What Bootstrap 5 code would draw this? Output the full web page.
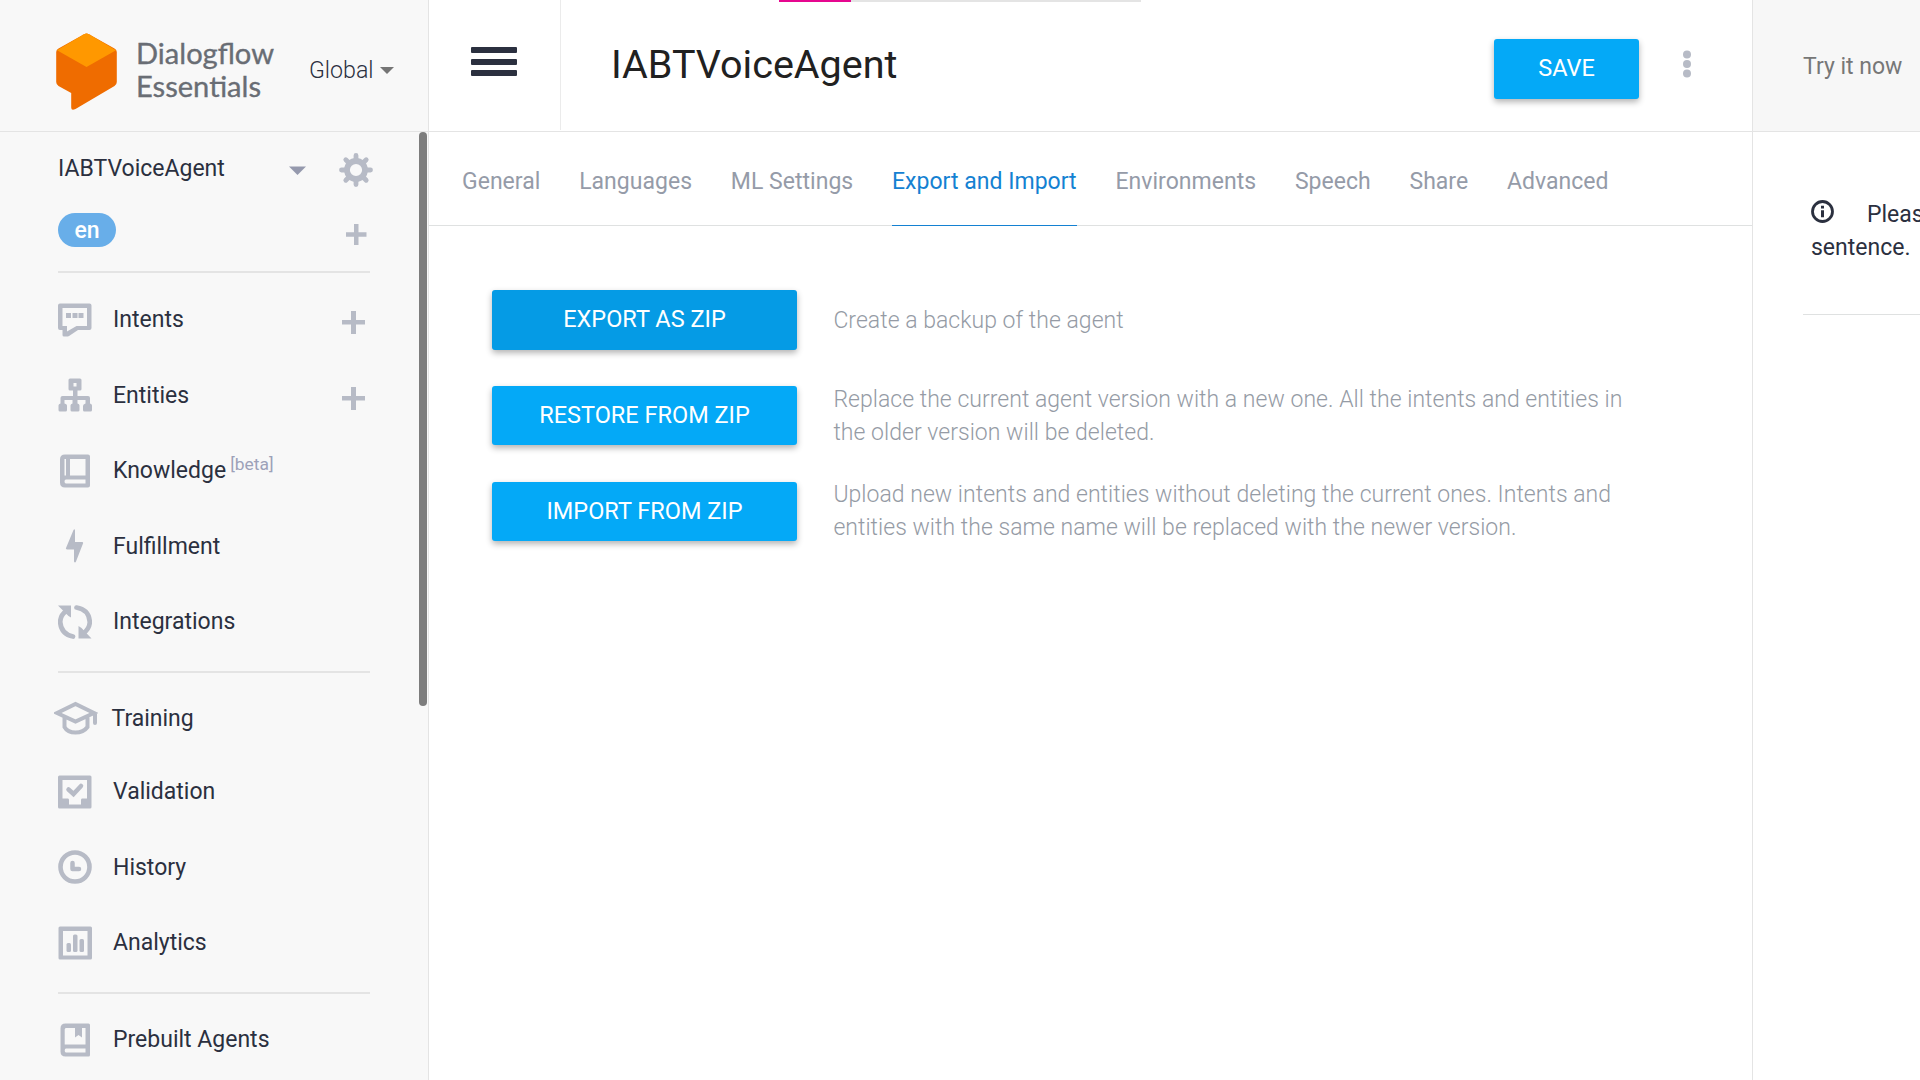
<!DOCTYPE html>
<html lang="en">
<head>
<meta charset="utf-8">
<title>Dialogflow Essentials</title>
<link href="https://cdn.jsdelivr.net/npm/bootstrap@5.3.0/dist/css/bootstrap.min.css" rel="stylesheet">
<style>
body{font-family:Roboto,"Liberation Sans",sans-serif;font-size:23px;line-height:33px;color:#2b303f;background:#fff;width:1920px;height:1080px;overflow:hidden}
svg{display:block;flex:none}
.side{width:429px;background:#f8f8f8;border-right:1px solid #e4e4e4}
.bar-top{height:132px;border-bottom:1px solid #e4e4e4}
.side .bar-top{padding-left:56px}
.region{font-weight:300;font-size:23.2px;margin-left:31px;padding-top:9px}
.side-scroll{height:948px;padding:0 58px;overflow:hidden}
.thumb{left:419px;top:132px;width:8px;height:574px;border-radius:4px;background:#7d7d7d}
.agent{height:75px}
.agent-name{margin-top:-2px}
.lang{height:64px}
.lang-pill{width:58px;height:34px;border-radius:17px;background:#68aee9;color:#fff;font-weight:500;line-height:36px;font-size:23px;margin-top:6px}
.rule{height:2px;background:#e4e4e4;flex:none}
.item{height:75.5px;gap:21px;flex:none}
.item-training{height:72px}
.gap-top{height:8.8px;flex:none}
.gap-end{height:11.7px;flex:none}
.gap-last{height:8px;flex:none}
.beta{font-size:17.4px;color:#9da1b8;top:-6px;margin-left:-17px}
.ico{fill:#b7bbc6;color:#b7bbc6}
.main{width:1323px}
.burger{width:132px;height:130px;border-right:1px solid #ebebeb;padding:47px 0 0 42px}
.burger span{display:block;width:46px;height:6px;border-radius:1px;background:#2b303f;margin-bottom:5.5px}
.agent-title{font-size:39.5px;line-height:48px;color:#212121;font-weight:400;margin:0;padding:41px 0 0 50px}
.mbtn{background:#04a9f7;color:#fff;border:0;border-radius:3px;font-size:23.5px;line-height:33px;padding:0;box-shadow:0 3px 6px rgba(0,0,0,.3)}
.save{width:145px;height:60px;margin:39px 44px 0 auto;padding-bottom:2px}
.tabs{height:94px;border-bottom:1px solid #dfe1e1;padding-left:33px;gap:38.8px;flex-wrap:nowrap}
.tabs .nav-link{padding:33px 0 0;height:94px;color:#959ba8;white-space:nowrap;border-radius:0;letter-spacing:.02px}
.tabs .nav-link.active{color:#1481d2;border-bottom:1px solid #1481d2}
.actions{padding:64px 0 0 63px}
.act{height:96px}
.act .mbtn{width:305px;height:59px;flex:none}
.act .mbtn.hot{background:#059be5;height:60px;padding-bottom:2px}
.act p{font-weight:300;color:#959ba5;margin:0 0 0 36.4px;white-space:nowrap;letter-spacing:.03px}
.try{width:168px;border-left:1px solid #e4e4e4}
.try .bar-top{background:#f7f7f7;color:#777;padding:50px 0 0 50px;white-space:nowrap}
.hint{padding:66px 0 0 58px;height:182px;white-space:nowrap;line-height:33px}
.progress-strip{left:779px;top:0;width:362px;height:2px;background:#e4e4e4}
.progress-strip div{width:72px;height:2px;background:#e6068f}
</style>
<script src="https://cdn.jsdelivr.net/npm/bootstrap@5.3.0/dist/js/bootstrap.bundle.min.js"></script>
</head>
<body class="d-flex position-relative">
<aside class="side flex-shrink-0 position-relative">
  <div class="bar-top d-flex">
    <svg width="222" height="131" viewBox="56 0 222 131">
      <path d="M58.5 48.5 84 34.2q2.500-1.400 5 0l25.500 14.300q2.300 1.300 2.300 3.500V82q0 2.500-2.300 4L75.500 109q-4.300 2-4.300-1.500V93L58.500 86q-2.300-1.500-2.300-4V52q0-2.200 2.300-3.500z" fill="#ef6c00"/>
      <path d="M57 50.200 84 34.200q2.500-1.400 5 0L116 50.200 86.500 67z" fill="#ff9800"/>
      <g font-family="Lato,sans-serif" font-size="28.500" fill="#696d74" stroke="#696d74" stroke-width=".35">
        <text x="136" y="64" textLength="138" lengthAdjust="spacingAndGlyphs">Dialogflow</text>
        <text x="136" y="96.500" textLength="125" lengthAdjust="spacingAndGlyphs">Essentials</text>
      </g>
    </svg>
    <div class="region d-flex align-items-center"><span>Global</span><svg style="margin-left:6px" width="14" height="7" viewBox="0 0 14 7"><path d="M0 0h14L7 7z" fill="#757575"/></svg></div>
  </div>
  <div class="side-scroll d-flex flex-column">
    <div class="agent d-flex align-items-center flex-shrink-0">
      <span class="agent-name">IABTVoiceAgent</span>
      <svg class="ms-auto" style="margin-top:2px" width="17" height="9" viewBox="0 0 17 9"><path d="M0 .5h17L8.500 9z" fill="#9599ad"/></svg>
      <svg class="ico" style="margin-left:33px;margin-right:-3px" width="34" height="34" viewBox="-17 -17 34 34"><circle r="9" fill="none" stroke="#b7bbc6" stroke-width="5.800"/><path d="M0-14.500V-10M0 10v4.500M-14.500 0H-10M10 0h4.500M-10.200-10.200l3 3M7.200 7.200l3 3M10.200-10.200l-3 3M-7.200 7.200l-3 3" stroke="#b7bbc6" stroke-width="4.800" stroke-linecap="round"/></svg>
    </div>
    <div class="lang d-flex flex-shrink-0 justify-content-between">
      <span class="lang-pill text-center">en</span>
      <svg class="ico" style="margin:17px 3.500px 0 0" width="22" height="21" viewBox="0 0 22 21"><path d="M9 0h4.500v8.300h8v4.500h-8V21H9v-8.200H1V8.300h8z"/></svg>
    </div>
    <div class="rule"></div>
    <div class="gap-top"></div>
    <div class="item d-flex align-items-center">
      <svg class="ico" width="34" height="34" viewBox="0 0 34 34"><path fill-rule="evenodd" d="M2 .5h29.500q2 0 2 2V25q0 2-2 2H20l-9 6q-1 .5-2 .5H6q-1.500 0-1.500-1.500v-5H2q-2 0-2-2V2.500q0-2 2-2zM4.500 5v18H9v5.500L18.500 23H29V5z"/><path d="M8 10h5v5H8zM14.500 10h5v5h-5zM20.500 10h5v5h-5z"/></svg>
      <span>Intents</span>
      <svg class="ico ms-auto" style="margin:6px 5px 0 0" width="23" height="23" viewBox="0 0 23 23"><path d="M9 0h5v9h9v4.500h-9V23H9v-9.500H0V9h9z"/></svg>
    </div>
    <div class="item d-flex align-items-center">
      <svg class="ico" width="34" height="34" viewBox="0 0 34 34"><path fill-rule="evenodd" d="M12 .5h10q1.500 0 1.500 1.500v9q0 1.500-1.500 1.500h-2.500V18H30q2 0 2 2v5.500q2 .3 2 2V32q0 1.500-1.500 1.500h-6Q25 33.500 25 32v-4q0-2 2.500-2.500V22h-8v3.500q2 .3 2 2V32q0 1.500-1.500 1.500h-6q-1.500 0-1.500-1.500v-4.500q0-1.700 2-2V22h-8v3.500q2.500.3 2.500 2V32q0 1.500-1.500 1.500H2Q.5 33.500.5 32v-4.500q0-1.700 2-2V20q0-2 2-2H15v-5.500h-3q-1.500 0-1.500-1.500V2q0-1.500 1.500-1.500zm3.500 4.500v3.500h3V5z"/></svg>
      <span>Entities</span>
      <svg class="ico ms-auto" style="margin:7px 5px 0 0" width="23" height="23" viewBox="0 0 23 23"><path d="M9 0h5v9h9v4.500h-9V23H9v-9.500H0V9h9z"/></svg>
    </div>
    <div class="item d-flex align-items-center">
      <svg class="ico" width="34" height="34" viewBox="0 0 34 34"><path fill-rule="evenodd" d="M7 .5h23q2 0 2 2v29q0 2-2 2H7q-5 0-5-5v-23q0-5 5-5zM6.500 5v16.500H8V5zM12 5v16.500h15.500V5zM8 25.500q-1.500 0-1.500 2t1.500 2h19.500v-4z"/></svg>
      <span>Knowledge</span><span class="beta position-relative">[beta]</span>
    </div>
    <div class="item d-flex align-items-center">
      <svg class="ico" width="34" height="34" viewBox="0 0 34 34"><path d="M15.500 1q1-1.500 1.500 0v12h7.500q1 .5.500 1.500l-7 18q-1 2-2 0V20.500H9q-1.500-.5-1-1.500z"/></svg>
      <span>Fulfillment</span>
    </div>
    <div class="item d-flex align-items-center">
      <svg class="ico" width="34" height="34" viewBox="0 0 34 34"><path d="M9 5.500Q2.200 10 2.200 17 3 29 15 31.500M18.500 2.500Q31 4.500 31.800 17 31.500 24 25 28.500" fill="none" stroke="#b7bbc6" stroke-width="4.700" stroke-linecap="round"/><path d="M0 .5h13V12.500l-2.500-1.500zM33.500 33.500H20.500V21l3 2z"/></svg>
      <span>Integrations</span>
    </div>
    <div class="gap-end"></div>
    <div class="rule"></div>
    <div class="gap-top"></div>
    <div class="item item-training d-flex align-items-center">
      <svg class="ico" style="margin:0 -6px 0 -4px" width="44" height="34" viewBox="0 0 44 34"><path d="M3 12 21.500 3 40 12 21.500 20.500zM10.500 16.500v9.500q3 5.500 11 5.500T33.500 26v-9.500M41 13v9" fill="none" stroke="#b7bbc6" stroke-width="4" stroke-linecap="round"/></svg>
      <span style="margin:1px 0 0 -1.500px">Training</span>
    </div>
    <div class="item d-flex align-items-center">
      <svg class="ico" width="34" height="34" viewBox="0 0 34 34"><path fill-rule="evenodd" d="M1.500.5h30.500q1.500 0 1.500 1.500v30q0 1.500-1.500 1.500H1.500Q0 33.500 0 32V2Q0 .5 1.500.5zM4.500 5v18.500H10q1 0 1 1.500v4.500h12V25q0-1.500 1-1.500h5V5z"/><path d="m10.500 14.500 5 4.500 7.500-8" fill="none" stroke="#b7bbc6" stroke-width="4.500" stroke-linecap="round"/></svg>
      <span>Validation</span>
    </div>
    <div class="item d-flex align-items-center">
      <svg class="ico" width="34" height="34" viewBox="0 0 34 34"><circle cx="17" cy="17" r="14.500" fill="none" stroke="#b7bbc6" stroke-width="4.600"/><path d="M14.500 13v6h6.500" fill="none" stroke="#b7bbc6" stroke-width="4.500" stroke-linecap="round" stroke-linejoin="round"/></svg>
      <span>History</span>
    </div>
    <div class="item d-flex align-items-center">
      <svg class="ico" width="34" height="34" viewBox="0 0 34 34"><path fill-rule="evenodd" d="M2 .5h30.500q1.500 0 1.500 1.500v30q0 1.500-1.500 1.500H2Q.5 33.500.5 32V2Q.5.500 2 .5zM5 5v24.500h24.500V5z"/><rect x="8.500" y="17" width="4.500" height="9" rx="1.500"/><rect x="15" y="8.500" width="4.500" height="17.500" rx="1.500"/><rect x="21.500" y="13" width="4.500" height="13" rx="1.500"/></svg>
      <span>Analytics</span>
    </div>
    <div class="gap-end"></div>
    <div class="rule"></div>
    <div class="gap-last"></div>
    <div class="item d-flex align-items-center">
      <svg class="ico" width="34" height="34" viewBox="0 0 34 34"><path fill-rule="evenodd" d="M7.500.5h23q1.500 0 1.500 1.500v30q0 1.500-1.500 1.500h-23q-5 0-5-5v-23q0-5 5-5zM8 5q-1.300 0-1.300 1.500v15H27.500V5H24v9.500L20.500 12 17 14.500V5zM8 25.500q-1.300 0-1.300 2t1.300 2h19.500v-4z"/></svg>
      <span>Prebuilt Agents</span>
    </div>
  </div>
  <div class="thumb position-absolute"></div>
</aside>
<main class="main flex-shrink-0">
  <div class="bar-top d-flex">
    <div class="burger"><span></span><span></span><span></span></div>
    <h1 class="agent-title">IABTVoiceAgent</h1>
    <button class="btn mbtn save">SAVE</button>
    <svg style="margin:50px 61px 0 0" width="8" height="28" viewBox="0 0 8 28" fill="#b7bbc6"><circle cx="4" cy="4.500" r="4"/><circle cx="4" cy="14" r="4"/><circle cx="4" cy="23.500" r="4"/></svg>
  </div>
  <nav class="nav tabs">
    <a class="nav-link">General</a><a class="nav-link">Languages</a><a class="nav-link">ML Settings</a><a class="nav-link active">Export and Import</a><a class="nav-link">Environments</a><a class="nav-link">Speech</a><a class="nav-link">Share</a><a class="nav-link">Advanced</a>
  </nav>
  <div class="actions">
    <div class="act d-flex"><button class="btn mbtn hot">EXPORT AS ZIP</button><p style="padding-top:14px">Create a backup of the agent</p></div>
    <div class="act d-flex"><button class="btn mbtn">RESTORE FROM ZIP</button><p style="margin-top:-3px">Replace the current agent version with a new one. All the intents and entities in<br>the older version will be deleted.</p></div>
    <div class="act d-flex"><button class="btn mbtn">IMPORT FROM ZIP</button><p style="margin-top:-4px">Upload new intents and entities without deleting the current ones. Intents and<br>entities with the same name will be replaced with the newer version.</p></div>
  </div>
</main>
<aside class="try flex-shrink-0 overflow-hidden">
  <div class="bar-top">Try it now</div>
  <div class="hint"><div class="d-flex"><svg style="margin:2px 33px 0 0" width="23" height="23" viewBox="0 0 23 23"><circle cx="11.500" cy="11.500" r="10" fill="none" stroke="#2b303f" stroke-width="2.800"/><path d="M10 5.800h3v2.800h-3zM10 10.300h3v7h-3z" fill="#2b303f"/></svg><span>Please</span></div><div>sentence.</div></div>
  <div style="height:1px;margin-left:50px;background:#dfe1e1"></div>
</aside>
<div class="progress-strip position-absolute"><div></div></div>
</body>
</html>
